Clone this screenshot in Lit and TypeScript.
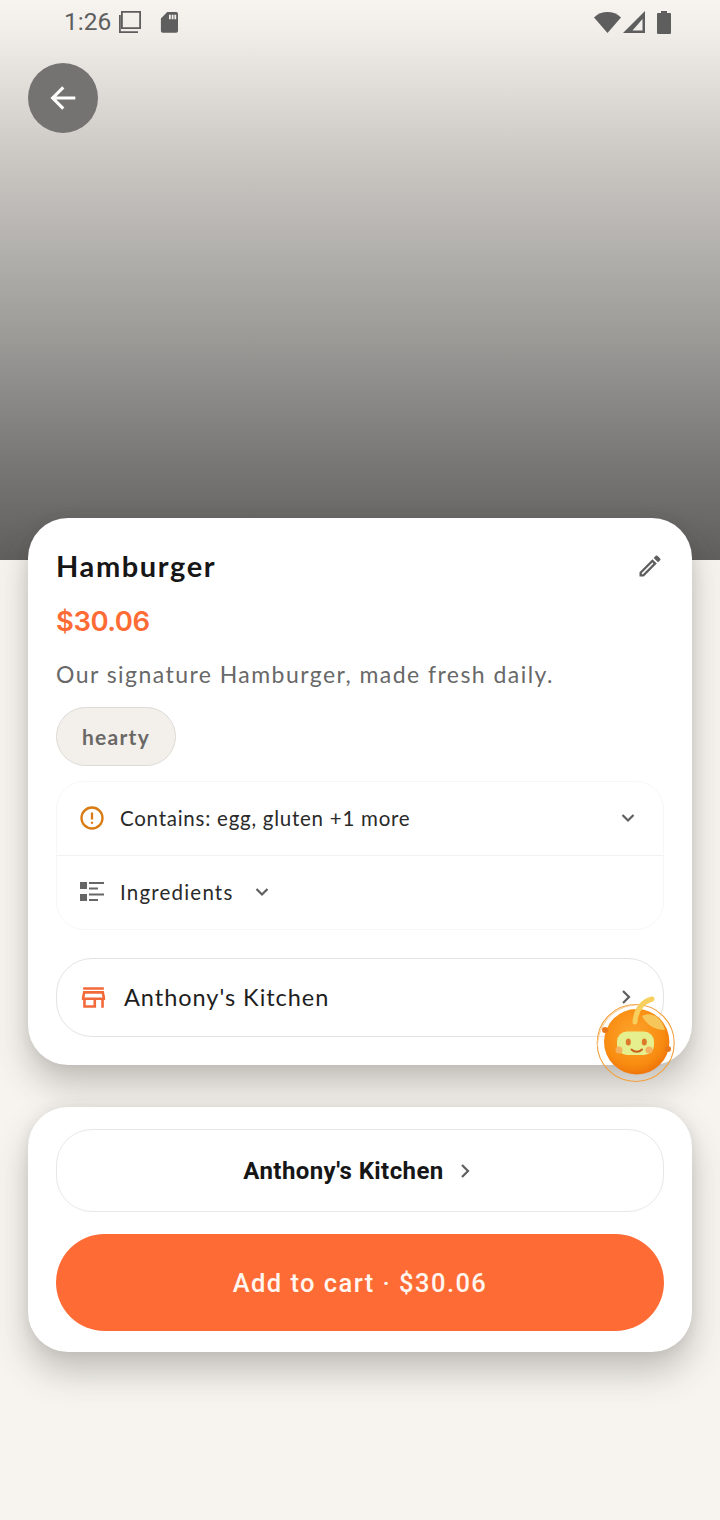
import { LitElement, html, css } from 'lit';
import { customElement } from 'lit/decorators.js';

const DOWN = 'M6.5 9 12 14.5 17.5 9';
const RIGHT = 'M9 6l6 6-6 6';

@customElement('app-root')
export class AppRoot extends LitElement {
    static styles = css`
        :host {
            display: block;
            position: relative;
            width: 720px;
            height: 1520px;
            overflow: hidden;
            background: #f7f4f0;
            font-family: 'Open Sans', 'Liberation Sans', sans-serif;
            color: #161616;
        }
        .hero {
            height: 560px;
            box-sizing: border-box;
            background: linear-gradient(180deg, #f7f4f0 0%, #f2efeb 5%, #c8c5c1 30%, #9c9b98 60%, #797876 82%, #605f5d 100%);
        }
        .status {
            height: 46px;
            padding: 0 49px 0 64px;
            display: flex;
            align-items: center;
            color: #5e5e5e;
            font: 400 24.5px Roboto, sans-serif;
        }
        .status svg { fill: #5e5e5e; display: block; }
        .time { width: 53px; margin-top: -4px; }
        .copy { margin-top: -3px; }
        .sd { margin: -3px 0 0 17px; }
        .status-right { margin-left: auto; display: flex; align-items: center; margin-top: -3px; }
        .status .tri { margin-left: 2px; }
        .status .batt { margin-left: 12px; }
        .back {
            width: 70px;
            height: 70px;
            margin: 17px 0 0 28px;
            border-radius: 50%;
            background: #747372;
            display: flex;
            align-items: center;
            justify-content: center;
        }
        .back svg { width: 34px; height: 34px; margin-left: 1px; fill: none; stroke: #fff; stroke-width: 2.2; }
        .card {
            margin: 0 28px;
            background: #fff;
            border-radius: 40px;
            box-shadow: 0 20px 34px rgba(60, 58, 52, 0.28), 0 0 14px rgba(60, 58, 52, 0.09);
            padding: 26px 28px 28px;
            box-sizing: border-box;
            position: relative;
        }
        .info { margin-top: -42px; height: 547px; }
        .title-row { display: flex; justify-content: space-between; align-items: center; height: 44px; }
        h1 { margin: 0; font: 700 29px/44px Lato, sans-serif; letter-spacing: 1.6px; color: #161616; }
        .edit { width: 28px; height: 28px; fill: #5f5f5f; }
        .price { margin-top: 14px; font: 600 27.5px/38px Inter, sans-serif; color: #ff6b35; letter-spacing: -0.5px; }
        .desc { margin-top: 16px; font: 400 23px/36px Lato, sans-serif; letter-spacing: 1.45px; color: #686868; }
        .tag {
            display: flex;
            align-items: center;
            justify-content: center;
            box-sizing: border-box;
            width: 120px;
            height: 59px;
            margin-top: 15px;
            border-radius: 30px;
            background: #f3f0ec;
            border: 1.5px solid #dedbd6;
            font: 700 21px Lato, sans-serif;
            letter-spacing: 1.3px;
            color: #6a6866;
        }
        .rows {
            margin-top: 15px;
            border: 1px solid #f8f7f6;
            border-radius: 28px;
        }
        .row {
            height: 73px;
            box-sizing: border-box;
            padding: 0 22px 1px;
            display: flex;
            align-items: center;
            font: 400 20.5px Lato, sans-serif;
            letter-spacing: 0.75px;
            color: #2a2a2a;
        }
        .row + .row { border-top: 1px solid #f3f2f0; height: 74px; }
        .row .ic { width: 26px; height: 26px; margin-right: 15px; flex: none; }
        .row .wide { letter-spacing: 1.2px; }
        .chev { width: 24px; height: 24px; fill: none; stroke: #5f5f5f; stroke-width: 2.2; flex: none; }
        .row .end { margin-left: auto; margin-right: 1px; }
        .row .near { margin-left: 16px; }
        .store {
            margin-top: 28px;
            height: 79px;
            box-sizing: border-box;
            border: 1.5px solid #e4e3e1;
            border-radius: 36px;
            padding: 0 24px 1px 21px;
            display: flex;
            align-items: center;
            font: 400 23.5px Lato, sans-serif;
            letter-spacing: 0.97px;
            color: #1e1e1e;
        }
        .store .ic { width: 31px; height: 31px; margin-right: 15px; flex: none; }
        .store .chev { margin-left: auto; margin-right: 1px; }
        .buy { margin-top: 42px; height: 245px; padding: 22px 28px 0; }
        .kitchen {
            height: 83px;
            box-sizing: border-box;
            border: 1.5px solid #e9e8e6;
            border-radius: 36px;
            display: flex;
            align-items: center;
            justify-content: center;
            gap: 9px;
            font: 700 24px Roboto, sans-serif;
            letter-spacing: 0.42px;
        }
        .cart {
            margin-top: 22px;
            height: 97px;
            border-radius: 49px;
            background: #ff6b35;
            color: #fff6ef;
            display: flex;
            align-items: center;
            justify-content: center;
            font: 500 25.5px Roboto, sans-serif;
            letter-spacing: 1.45px;
        }
        .mascot { position: absolute; left: 594px; top: 994px; width: 84px; height: 92px; }
    `;

    renderChevron(d: string, cls = '') {
        return html`<svg class="chev ${cls}" viewBox="0 0 24 24"><path d=${d}></path></svg>`;
    }

    render() {
        return html`
            <div class="hero">
                <div class="status">
                    <span class="time">1:26</span>
                    <svg class="copy" width="26" height="26" viewBox="0 0 26 26">
                        <path fill-rule="evenodd" d="M4 2h20v18H4zM5.800 3.800v14.400h16.400V3.800z"></path>
                        <path d="M2 6h1.800v16.200H21V24H2z"></path>
                    </svg>
                    <svg class="sd" width="18" height="22" viewBox="0 0 20 24">
                        <path fill-rule="evenodd" d="M8 1h10a2 2 0 0 1 2 2v19a2 2 0 0 1-2 2H3a2 2 0 0 1-2-2V8zM10 4v5h2V4zM13 4v5h2V4zM16 4v5h2V4z"></path>
                    </svg>
                    <div class="status-right">
                        <svg width="27" height="22" viewBox="0 0 27 22"><path d="M0 6.500C7.500-.8 19.500-.8 27 6.500L13.500 22z"></path></svg>
                        <svg class="tri" width="22" height="22" viewBox="0 0 22 22"><path fill-rule="evenodd" d="M22 0v22H0zM19.500 8 9.500 19.500h10z"></path></svg>
                        <svg class="batt" width="14" height="24" viewBox="0 0 14 24"><path d="M4 1h6v2h3a1 1 0 0 1 1 1v19a1 1 0 0 1-1 1H1a1 1 0 0 1-1-1V4a1 1 0 0 1 1-1h3z"></path></svg>
                    </div>
                </div>
                <div class="back">
                    <svg viewBox="0 0 24 24"><path d="M20 12H4.500M11.500 4.500 4 12l7.500 7.500"></path></svg>
                </div>
            </div>

            <div class="card info">
                <div class="title-row">
                    <h1>Hamburger</h1>
                    <svg class="edit" viewBox="0 0 24 24">
                        <path d="M3 17.250V21h3.750L17.810 9.940l-3.750-3.750zM5.920 19H5v-.92l9.060-9.060.92.92zM20.710 7.040a1 1 0 0 0 0-1.410l-2.340-2.340a1 1 0 0 0-1.410 0l-1.830 1.830 3.750 3.750z"></path>
                    </svg>
                </div>
                <div class="price">$30.06</div>
                <div class="desc">Our signature Hamburger, made fresh daily.</div>
                <div class="tag">hearty</div>
                <div class="rows">
                    <div class="row">
                        <svg class="ic" viewBox="0 0 26 26" fill="none" stroke="#d97b12" stroke-width="2.300">
                            <circle cx="13" cy="13" r="10.500"></circle>
                            <path d="M13 7.500v7M13 16.800v2"></path>
                        </svg>
                        Contains: egg, gluten +1 more
                        ${this.renderChevron(DOWN, 'end')}
                    </div>
                    <div class="row">
                        <svg class="ic" viewBox="0 0 26 26" fill="#666">
                            <path d="M1 3h7v7H1zM1 15h7v7H1zM10 3h15v2H10zM10 8.500h9v2H10zM10 14.500h15v2H10zM10 20h9v2H10z"></path>
                        </svg>
                        <span class="wide">Ingredients</span>
                        ${this.renderChevron(DOWN, 'near')}
                    </div>
                </div>
                <div class="store">
                    <svg class="ic" viewBox="0 0 24 24" fill="#f2693a">
                        <path d="M18.360 9l.6 3H5.040l.6-3h12.720M20 4H4v2h16V4zm0 3H4l-1 5v2h1v6h10v-6h4v6h2v-6h1v-2l-1-5zM6 18v-4h6v4H6z"></path>
                    </svg>
                    Anthony's Kitchen
                    ${this.renderChevron(RIGHT)}
                </div>
            </div>

            <div class="card buy">
                <div class="kitchen">Anthony's Kitchen ${this.renderChevron(RIGHT)}</div>
                <div class="cart">Add to cart · $30.06</div>
            </div>

            <svg class="mascot" viewBox="0 0 84 92">
                <defs>
                    <radialGradient id="body" cx="45%" cy="40%" r="65%">
                        <stop offset="0%" stop-color="#ffa52e"></stop>
                        <stop offset="70%" stop-color="#f88c10"></stop>
                        <stop offset="100%" stop-color="#ee6f08"></stop>
                    </radialGradient>
                </defs>
                <circle cx="41.700" cy="49" r="38.500" fill="none" stroke="#f4a03c" stroke-width="1.100"></circle>
                <path d="M3.500 52C4 30 20 12 42 11" fill="none" stroke="#f8c98e" stroke-width="1"></path>
                <circle cx="42.700" cy="47.700" r="32.700" fill="url(#body)"></circle>
                <path d="M41 28C42 16 48 8 58 5" fill="none" stroke="#f7cf5e" stroke-width="5" stroke-linecap="round"></path>
                <path d="M48 22C58 17 68 24 71 36 60 36 52 30 48 22z" fill="#f6c65a"></path>
                <circle cx="11" cy="36" r="3" fill="#e8781a"></circle>
                <circle cx="74" cy="55" r="3" fill="#e8781a"></circle>
                <rect x="23" y="37.500" width="37" height="23.500" rx="10" fill="#e6ef8e"></rect>
                <ellipse cx="34.300" cy="48" rx="2.500" ry="3.600" fill="#dd7a2a"></ellipse>
                <ellipse cx="50.300" cy="48" rx="2.500" ry="3.600" fill="#dd7a2a"></ellipse>
                <circle cx="25" cy="56" r="3.500" fill="#f5b25e"></circle>
                <circle cx="55" cy="56" r="3.500" fill="#f5b25e"></circle>
                <path d="M37.500 55.500c3 3 7.500 3 10.500 0" fill="none" stroke="#c9601c" stroke-width="2" stroke-linecap="round"></path>
            </svg>
        `;
    }
}
